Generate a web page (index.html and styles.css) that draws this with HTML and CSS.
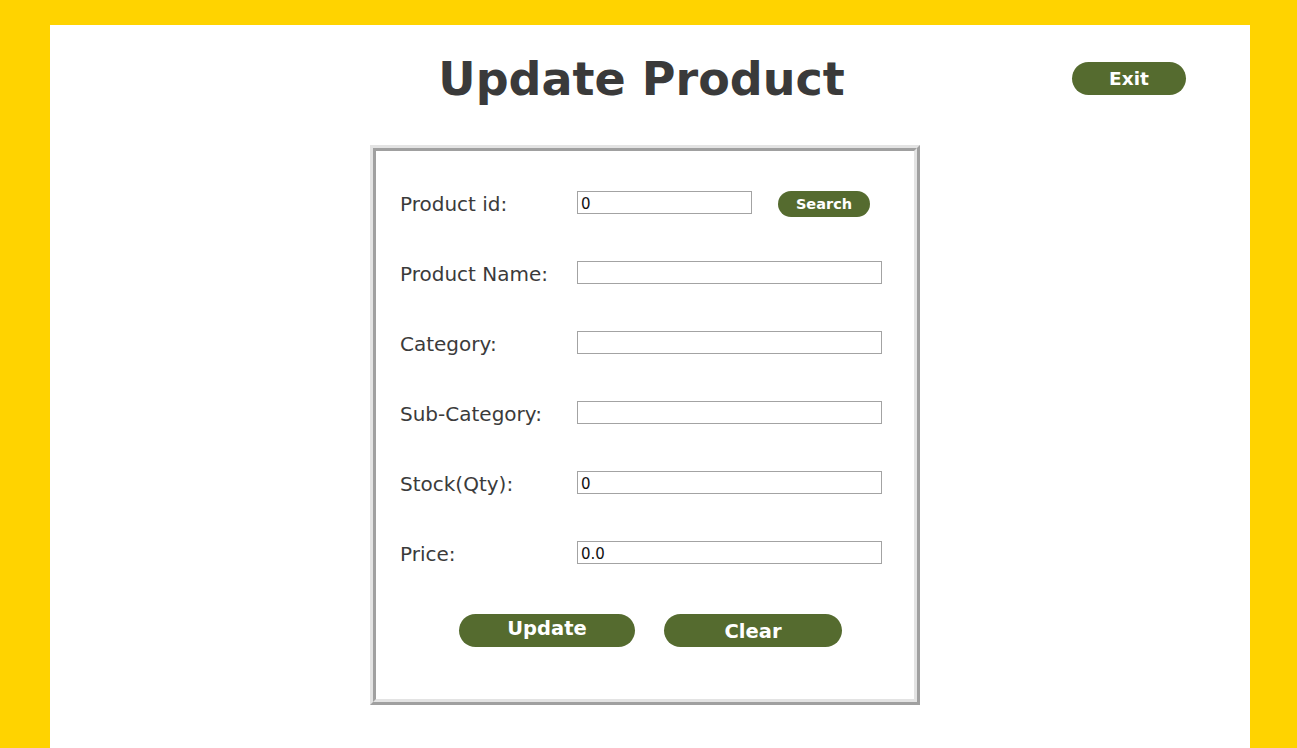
FILE: index.html
```html
<!DOCTYPE html>
<html lang="en">
<head>
<meta charset="utf-8">
<title>Update Product</title>
<link rel="stylesheet" href="styles.css">
</head>
<body>
<div class="panel">
  <header class="header">
    <div class="spacer"></div>
    <h1 class="title">Update Product</h1>
    <div class="exit-wrap"><button class="btn btn-exit" type="button">Exit</button></div>
  </header>
  <div class="box-outer">
    <form class="box-inner">
      <div class="row">
        <label class="label">Product id:</label>
        <div class="field-with-btn">
          <input class="input input-short" type="text" value="0">
          <button class="btn btn-search" type="button">Search</button>
        </div>
      </div>
      <div class="row">
        <label class="label">Product Name:</label>
        <input class="input" type="text" value="">
      </div>
      <div class="row">
        <label class="label">Category:</label>
        <input class="input" type="text" value="">
      </div>
      <div class="row">
        <label class="label">Sub-Category:</label>
        <input class="input" type="text" value="">
      </div>
      <div class="row">
        <label class="label">Stock(Qty):</label>
        <input class="input" type="text" value="0">
      </div>
      <div class="row">
        <label class="label">Price:</label>
        <input class="input" type="text" value="0.0">
      </div>
      <div class="actions">
        <button class="btn btn-big btn-update" type="button">Update</button>
        <button class="btn btn-big btn-clear" type="button">Clear</button>
      </div>
    </form>
  </div>
</div>
</body>
</html>
```
FILE: styles.css
```css
html, body {
  margin: 0;
  padding: 0;
  height: 100%;
}
body {
  background: #ffd300;
  font-family: "DejaVu Sans", Verdana, sans-serif;
  overflow: hidden;
}
.panel {
  margin: 25px 47px 0 50px;
  background: #ffffff;
  min-height: 723px;
  box-sizing: border-box;
}
.header {
  display: grid;
  grid-template-columns: 1fr auto 1fr;
  align-items: start;
  height: 120px;
  padding-right: 17px;
}
.title {
  margin: 0;
  padding-top: 28px;
  font-size: 46px;
  font-weight: bold;
  color: #3a3a3a;
  line-height: 52px;
  letter-spacing: 0;
}
.exit-wrap {
  display: flex;
  justify-content: flex-end;
  padding-top: 37px;
  padding-right: 47px;
}
.btn {
  border: none;
  background: #556b2f;
  color: #ffffff;
  font-family: "DejaVu Sans", Verdana, sans-serif;
  font-weight: bold;
  padding: 0;
  cursor: pointer;
}
.btn-exit {
  width: 114px;
  height: 33px;
  border-radius: 17px;
  font-size: 18.5px;
  line-height: 33px;
}
.box-outer {
  margin-left: 320px;
  width: 550px;
  height: 560px;
  box-sizing: border-box;
  border: 3px solid;
  border-color: #e3e3e3 #a0a0a0 #a0a0a0 #e3e3e3;
}
.box-inner {
  margin: 0;
  height: 100%;
  box-sizing: border-box;
  border: 3px solid;
  border-color: #a0a0a0 #e3e3e3 #e3e3e3 #a0a0a0;
  padding: 40px 0 0 24px;
  display: flex;
  flex-direction: column;
  gap: 47px;
}
.row {
  display: grid;
  grid-template-columns: 177px auto;
  grid-template-rows: 23px;
  align-items: center;
  height: 23px;
}
.label {
  font-size: 20px;
  color: #3b3b3b;
  line-height: 23px;
  height: 23px;
  position: relative;
  top: 2px;
}
.field-with-btn {
  display: flex;
  align-items: flex-start;
  gap: 26px;
  height: 23px;
}
.input {
  box-sizing: border-box;
  width: 305px;
  height: 23px;
  border: 1px solid #a3a3a3;
  border-radius: 0;
  padding: 2px 3px 0;
  margin: 0;
  font-family: "DejaVu Sans", Verdana, sans-serif;
  font-size: 15px;
  color: #111111;
  outline: none;
  background: #ffffff;
}
.input-short {
  width: 175px;
}
.btn-search {
  width: 92px;
  height: 26px;
  border-radius: 13px;
  font-size: 14.5px;
  line-height: 26px;
}
.actions {
  display: flex;
  gap: 29px;
  padding-left: 59px;
  margin-top: 3px;
}
.btn-big {
  height: 33px;
  border-radius: 17px;
  font-size: 19.5px;
}
.btn-update {
  width: 176px;
  line-height: 29px;
  padding-bottom: 4px;
}
.btn-clear {
  width: 178px;
  line-height: 33px;
  padding-top: 1px;
}
```
